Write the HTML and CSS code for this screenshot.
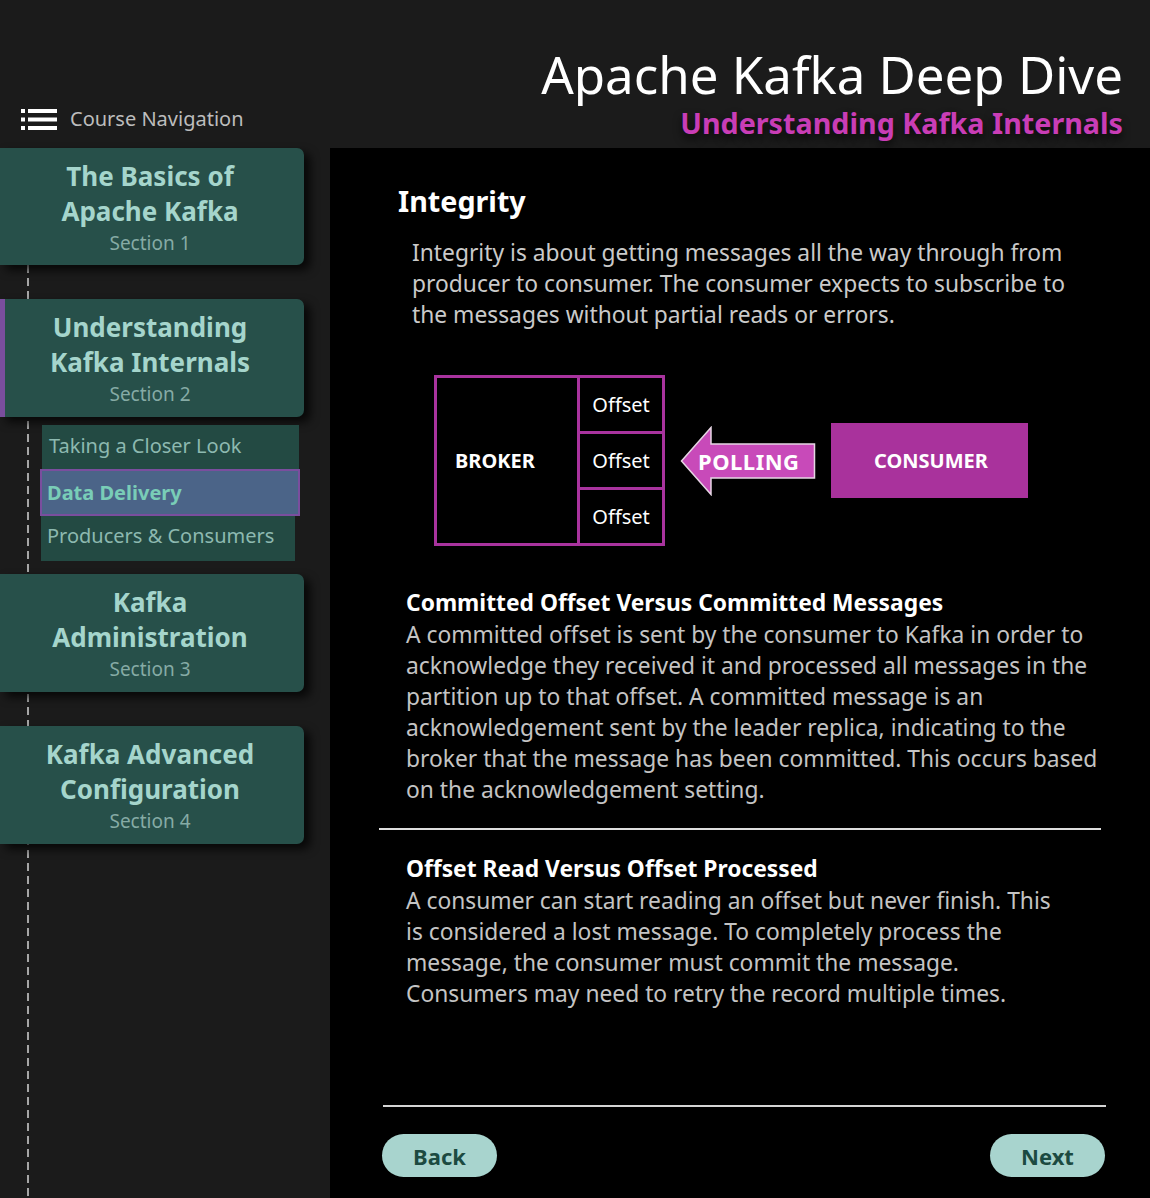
FILE: index.html
```html
<!DOCTYPE html>
<html lang="en">
<head>
<meta charset="utf-8">
<title>Apache Kafka Deep Dive</title>
<link rel="stylesheet" href="styles.css">
</head>
<body>
<header class="top">
  <div class="nav-label">
    <svg class="nav-icon" width="36" height="21" viewBox="0 0 36 21" aria-hidden="true">
      <rect x="0" y="0" width="4" height="4" fill="#fff"/>
      <rect x="7" y="0" width="29" height="4" fill="#fff"/>
      <rect x="0" y="8.5" width="4" height="4" fill="#fff"/>
      <rect x="7" y="8.5" width="29" height="4" fill="#fff"/>
      <rect x="0" y="17" width="4" height="4" fill="#fff"/>
      <rect x="7" y="17" width="29" height="4" fill="#fff"/>
    </svg>
    <span>Course Navigation</span>
  </div>
  <div class="titles">
    <h1 class="title">Apache Kafka Deep Dive</h1>
    <div class="subtitle">Understanding Kafka Internals</div>
  </div>
</header>

<div class="layout">
  <nav class="sidebar">
    <div class="card card-first">
      <div class="card-title">The Basics of<br>Apache Kafka</div>
      <div class="card-section">Section 1</div>
    </div>
    <div class="card card-active">
      <div class="card-title">Understanding<br>Kafka Internals</div>
      <div class="card-section">Section 2</div>
    </div>
    <div class="sublist">
      <div class="subitem sub-1">Taking a Closer Look</div>
      <div class="subitem sub-current">Data Delivery</div>
      <div class="subitem sub-3">Producers &amp; Consumers</div>
    </div>
    <div class="card card-after-sub">
      <div class="card-title">Kafka<br>Administration</div>
      <div class="card-section">Section 3</div>
    </div>
    <div class="card">
      <div class="card-title">Kafka Advanced<br>Configuration</div>
      <div class="card-section">Section 4</div>
    </div>
  </nav>

  <main class="content">
    <h2 class="heading">Integrity</h2>
    <p class="intro">Integrity is about getting messages all the way through from producer to consumer. The consumer expects to subscribe to the messages without partial reads or errors.</p>

    <div class="diagram">
      <div class="broker">
        <div class="broker-label">BROKER</div>
        <div class="offsets">
          <div class="offset">Offset</div>
          <div class="offset">Offset</div>
          <div class="offset">Offset</div>
        </div>
      </div>
      <div class="arrow">
        <svg class="arrow-shape" width="136" height="70" viewBox="0 0 136 70" aria-hidden="true">
          <polygon points="1.5,35 31,1.5 31,18 134.5,18 134.5,52 31,52 31,68.5" fill="#c84ab9" stroke="#e6d6e4" stroke-width="1.5"/>
        </svg>
        <span class="arrow-text">POLLING</span>
      </div>
      <div class="consumer">CONSUMER</div>
    </div>

    <section class="block block-2">
      <h3 class="block-title">Committed Offset Versus Committed Messages</h3>
      <p class="block-text">A committed offset is sent by the consumer to Kafka in order to acknowledge they received it and processed all messages in the partition up to that offset. A committed message is an acknowledgement sent by the leader replica, indicating to the broker that the message has been committed. This occurs based on the acknowledgement setting.</p>
    </section>

    <hr class="rule">

    <section class="block block-3">
      <h3 class="block-title">Offset Read Versus Offset Processed</h3>
      <p class="block-text">A consumer can start reading an offset but never finish. This is considered a lost message. To completely process the message, the consumer must commit the message. Consumers may need to retry the record multiple times.</p>
    </section>

    <footer class="footer">
      <hr class="rule rule-bottom">
      <div class="buttons">
        <button class="btn">Back</button>
        <button class="btn">Next</button>
      </div>
    </footer>
  </main>
</div>
</body>
</html>
```

FILE: styles.css
```css
* { box-sizing: border-box; }

html, body {
  margin: 0;
  padding: 0;
}

body {
  background: #1b1b1b;
  font-family: "Noto Sans", "Open Sans", sans-serif;
  color: #fff;
  width: 1150px;
  min-height: 1198px;
  overflow: hidden;
}

/* ---------- header ---------- */
.top {
  height: 148px;
  display: flex;
  justify-content: space-between;
  align-items: flex-end;
}

.nav-label {
  display: flex;
  align-items: center;
  padding-left: 21px;
  padding-bottom: 15px;
  color: #bdbdbd;
  font-size: 20px;
  line-height: 28px;
}

.nav-icon {
  display: block;
  margin-right: 13px;
}

.titles {
  text-align: right;
  padding-right: 27px;
  padding-bottom: 9px;
}

.title {
  margin: 0 0 4px 0;
  font-size: 51px;
  font-weight: 400;
  line-height: 58px;
  color: #fff;
}

.subtitle {
  font-size: 28.7px;
  font-weight: 700;
  line-height: 32px;
  color: #c93db6;
  text-shadow: 0 5px 8px rgba(0, 0, 0, 0.7);
}

/* ---------- layout ---------- */
.layout {
  display: flex;
  min-height: 1050px;
}

.sidebar {
  width: 330px;
  flex: none;
  background-color: #1b1b1b;
  background-image: repeating-linear-gradient(to bottom, #a6a6a6 0 8px, transparent 8px 13px);
  background-size: 2px 100%;
  background-position: 27px 0;
  background-repeat: no-repeat;
  padding-bottom: 20px;
}

.card {
  width: 304px;
  background: #27504a;
  border-radius: 0 7px 7px 0;
  padding: 11px 4px 9px 0;
  text-align: center;
  box-shadow: 6px 5px 10px rgba(0, 0, 0, 0.75);
  margin-top: 34px;
}

.card-first { margin-top: 0; padding-bottom: 8px; }

.card-active {
  box-shadow: inset 5px 0 0 #7a4e9e, 6px 5px 10px rgba(0, 0, 0, 0.75);
}

.card-after-sub { margin-top: 13px; }

.card-title {
  font-size: 26px;
  font-weight: 700;
  line-height: 35px;
  color: #a5d5cc;
}

.card-section {
  font-size: 19px;
  line-height: 28px;
  color: #86aba5;
}

.sublist {
  margin-top: 8px;
  padding-left: 41px;
  display: flex;
  flex-direction: column;
  align-items: flex-start;
}

.subitem {
  font-size: 20px;
  background: #234a43;
  color: #8db9b0;
  display: flex;
  align-items: center;
  padding-bottom: 3px;
}

.sub-1 {
  width: 257px;
  height: 44px;
  margin-left: 1px;
  padding-left: 7px;
}

.sub-current {
  width: 260px;
  height: 47px;
  margin-left: -1px;
  background: #4b6488;
  border: 2px solid #7a4e9e;
  font-weight: 700;
  color: #79cdb7;
  padding-left: 5px;
  padding-bottom: 0;
}

.sub-3 {
  width: 254px;
  height: 45px;
  padding-left: 6px;
  padding-bottom: 6px;
}

/* ---------- main ---------- */
.content {
  flex: 1;
  background: #000;
  padding: 34px 49px 21px 49px;
  display: flex;
  flex-direction: column;
}

.heading {
  margin: 0 0 0 19px;
  font-size: 28.7px;
  font-weight: 700;
  line-height: 38px;
  color: #fff;
}

.intro {
  margin: 17px 0 0 33px;
  max-width: 680px;
  font-size: 22.8px;
  line-height: 31px;
  color: #cacaca;
}

.diagram {
  margin: 45px 0 0 55px;
  display: flex;
  align-items: center;
}

.broker {
  width: 231px;
  height: 171px;
  border: 3px solid #a8339e;
  display: flex;
}

.broker-label {
  width: 143px;
  flex: none;
  display: flex;
  align-items: center;
  padding-left: 18px;
  font-size: 20px;
  font-weight: 700;
  color: #fff;
  border-right: 3px solid #a8339e;
}

.offsets {
  flex: 1;
  display: flex;
  flex-direction: column;
}

.offset {
  flex: 1;
  display: flex;
  align-items: center;
  justify-content: center;
  font-size: 20px;
  color: #fff;
}

.offset + .offset {
  border-top: 3px solid #a8339e;
}

.arrow {
  position: relative;
  width: 136px;
  height: 70px;
  margin-left: 15px;
  display: flex;
  align-items: center;
}

.arrow-shape {
  position: absolute;
  left: 0;
  top: 0;
}

.arrow-text {
  position: relative;
  margin-left: 18px;
  font-size: 22px;
  font-weight: 700;
  letter-spacing: 0.5px;
  color: #fff;
}

.consumer {
  width: 197px;
  height: 75px;
  margin-left: 15px;
  background: #a9329c;
  display: flex;
  align-items: center;
  justify-content: center;
  font-size: 20px;
  font-weight: 700;
  color: #fff;
  padding-left: 3px;
}

.block {
  margin-left: 27px;
}

.block-2 {
  margin-top: 41px;
  max-width: 700px;
}

.block-3 {
  margin-top: 23px;
  max-width: 655px;
}

.block-title {
  margin: 0;
  font-size: 22.8px;
  font-weight: 700;
  line-height: 32px;
  color: #fff;
}

.block-text {
  margin: 0;
  font-size: 22.8px;
  line-height: 31px;
  color: #c4c4c4;
}

.rule {
  border: 0;
  height: 2px;
  background: #dedede;
  margin: 23px 0 0 0;
  width: 722px;
}

.footer {
  margin-top: auto;
  margin-left: 4px;
  margin-right: -5px;
}

.rule-bottom {
  margin: 0;
  width: 723px;
  background: #d4d4d4;
}

.buttons {
  margin-top: 27px;
  display: flex;
  justify-content: space-between;
  padding-right: 1px;
}

.btn {
  width: 115px;
  height: 43px;
  border: 0;
  border-radius: 22px;
  background: #a8d4ce;
  color: #1c4a41;
  font-family: "Noto Sans", "Open Sans", sans-serif;
  font-size: 22px;
  font-weight: 700;
  padding: 0;
  margin-left: -1px;
}
```
